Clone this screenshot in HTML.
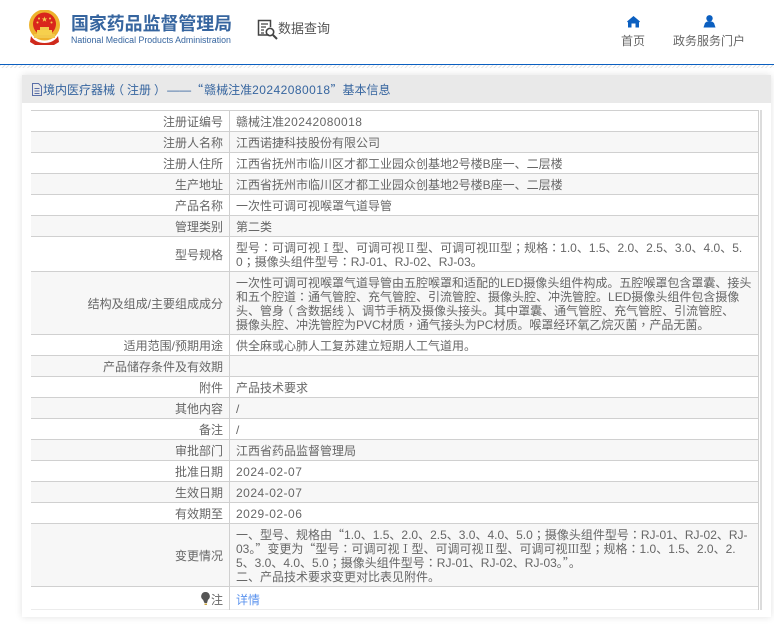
<!DOCTYPE html>
<html><head><meta charset="utf-8"><style>
html,body{margin:0;padding:0;background:#fff}
body{width:774px;height:626px;overflow:hidden;position:relative;font-family:"Liberation Sans","Noto Sans CJK SC",sans-serif;color:#666;font-size:12px}
.a{position:absolute;white-space:nowrap}
.r{position:absolute;left:31px;width:727px;border-bottom:1px solid #d0d0d0;box-sizing:border-box}
.r.g{background:#f7f7f7}
.l{position:absolute;left:31px;width:192px;text-align:right;font-size:12px;line-height:16px;white-space:nowrap;margin-top:1px}
.v{position:absolute;left:236px;font-size:12px;line-height:14px;white-space:nowrap;margin-top:1px}
b{font-weight:400;font-family:"Noto Sans CJK TC",sans-serif}
b.p1{position:relative;left:-3px}
b.p2{position:relative;left:3px}
u{text-decoration:none;font-family:"Noto Sans CJK SC",sans-serif}
em{font-style:normal;font-family:"Noto Serif CJK SC",serif;display:inline-block;width:12px;text-align:center}
i{font-style:normal;letter-spacing:.45px}
</style></head><body>
<svg class="a" style="left:28px;top:10px" width="33" height="36" viewBox="0 0 33 36">
<circle cx="16.5" cy="15" r="15.5" fill="#eeb32d"/><circle cx="16.5" cy="14" r="11.5" fill="#d9261c"/>
<path d="M6 24h21v4H6z" fill="#f2c94c"/><path d="M9 20h15v5H9z" fill="#f6d04d"/><path d="M12 17h9v3h-9z" fill="#f2c94c"/>
<path d="M3 26c3 5 8 7 13.500 7S27 31 30 26l1 6-5 3H7l-5-3z" fill="#cf2a1c"/>
<path d="M16.500 6.500l.7 2h2.100l-1.700 1.300.7 2-1.800-1.300-1.800 1.300.7-2-1.700-1.300h2.100z" fill="#f6d04d"/>
<circle cx="11" cy="8.500" r="1" fill="#f6d04d"/><circle cx="22" cy="8.500" r="1" fill="#f6d04d"/><circle cx="9.500" cy="12.500" r="1" fill="#f6d04d"/><circle cx="23.500" cy="12.500" r="1" fill="#f6d04d"/>
</svg>
<div class="a" style="left:71px;top:11px;font-size:17.9px;line-height:26px;font-weight:700;color:#36659f">国家药品监督管理局</div>
<div class="a" style="left:71px;top:34px;font-size:8.8px;line-height:12px;color:#36659f">National Medical Products Administration</div>
<svg class="a" style="left:257px;top:19px" width="22" height="21" viewBox="0 0 22 21" fill="none" stroke="#444">
<path d="M12 16H1.500V1.500h12V8" stroke-width="1.500"/><path d="M4 5h7M4 8h5M4 11h3M4 14h3" stroke-width="1.200"/><circle cx="13" cy="13" r="3.700" stroke-width="1.600"/><path d="M16 16l4 4" stroke-width="2"/>
</svg>
<div class="a" style="left:278px;top:20px;font-size:13px;line-height:18px;color:#555">数据查询</div>
<svg class="a" style="left:627px;top:15px" width="13" height="13" viewBox="0 0 13 13"><path d="M6.500 1L13 6.500 12 7.500V12.500H8.500V8.500h-4v4H1V7.500L0 6.500z" fill="#0b5fc0"/></svg>
<svg class="a" style="left:703px;top:15px" width="13" height="13" viewBox="0 0 13 13"><circle cx="6.500" cy="3.300" r="3.200" fill="#0b5fc0"/><path d="M4 6.500h5l2 1.500 1.500 4.500H.5L2 8z" fill="#0b5fc0"/></svg>
<div class="a" style="left:621px;top:33px;font-size:12px;line-height:15px;margin-top:1px">首页</div>
<div class="a" style="left:673px;top:33px;font-size:12px;line-height:15px;margin-top:1px">政务服务门户</div>
<div class="a" style="left:0;top:64px;width:774px;height:1px;background:#0b5fc0"></div>
<div class="a" style="left:0;top:65px;width:774px;height:3px;background:repeating-linear-gradient(135deg,#e4e4e4 0 1px,#fff 1px 3px)"></div>
<div class="a" style="left:22px;top:75px;width:749px;height:542px;background:#fff;box-shadow:0 0 7px rgba(0,0,0,.12)"></div>
<div class="a" style="left:22px;top:75px;width:749px;height:28px;background:#e9e9e9"></div>
<svg class="a" style="left:32px;top:83px" width="10" height="13" viewBox="0 0 10 13" fill="none" stroke="#5a6fa8"><path d="M.5.500h6l3 3v9H.5zM2.500 5.500h5M2.500 8h5M2.500 10.500h5"/></svg>
<div class="a" style="left:43px;top:82px;font-size:12px;line-height:16px;color:#36659f">境内医疗器械<b class="p1">（</b>注册<b class="p2">）</b><span style="margin-left:4px">——</span><u>“</u><span style="margin-left:1px">赣</span>械注准<i>20242080018</i><u>”</u>基本信息</div>

<div class="a" style="left:31px;top:110px;width:727px;height:1px;background:#d0d0d0"></div>
<div class="r" style="top:111px;height:21px"></div>
<div class="r g" style="top:132px;height:21px"></div>
<div class="r" style="top:153px;height:21px"></div>
<div class="r g" style="top:174px;height:21px"></div>
<div class="r" style="top:195px;height:21px"></div>
<div class="r g" style="top:216px;height:21px"></div>
<div class="r" style="top:237px;height:35px"></div>
<div class="r g" style="top:272px;height:63px"></div>
<div class="r" style="top:335px;height:21px"></div>
<div class="r g" style="top:356px;height:21px"></div>
<div class="r" style="top:377px;height:21px"></div>
<div class="r g" style="top:398px;height:21px"></div>
<div class="r" style="top:419px;height:21px"></div>
<div class="r g" style="top:440px;height:21px"></div>
<div class="r" style="top:461px;height:21px"></div>
<div class="r g" style="top:482px;height:21px"></div>
<div class="r" style="top:503px;height:21px"></div>
<div class="r g" style="top:524px;height:63px"></div>
<div class="r" style="top:587px;height:23px;border-bottom:1px solid #ececec"></div>
<div class="a" style="left:229px;top:110px;width:1px;height:500px;background:#d0d0d0"></div>
<div class="a" style="left:758px;top:110px;width:1px;height:500px;background:#d0d0d0"></div>
<div class="a" style="left:760px;top:110px;width:2px;height:500px;background:#dcdcdc"></div>

<div class="l" style="top:113px">注册证编号</div><div class="v" style="top:114px">赣械注准<i>20242080018</i></div>
<div class="l" style="top:134px">注册人名称</div><div class="v" style="top:135px">江西诺捷科技股份有限公司</div>
<div class="l" style="top:155px">注册人住所</div><div class="v" style="top:156px">江西省抚州市临川区才都工业园众创基地2号楼B座一、二层楼</div>
<div class="l" style="top:176px">生产地址</div><div class="v" style="top:177px">江西省抚州市临川区才都工业园众创基地2号楼B座一、二层楼</div>
<div class="l" style="top:197px">产品名称</div><div class="v" style="top:198px">一次性可调可视喉罩气道导管</div>
<div class="l" style="top:218px">管理类别</div><div class="v" style="top:219px">第二类</div>
<div class="l" style="top:246px">型号规格</div>
<div class="v" style="top:240px">型号<b>：</b>可调可视<em>Ⅰ</em>型、可调可视<em>Ⅱ</em>型、可调可视<em>Ⅲ</em>型<b>；</b>规格<b>：</b>1.0、1.5、2.0、2.5、3.0、4.0、5.</div>
<div class="v" style="top:254px">0<b>；</b>摄像头组件型号<b>：</b>RJ-01、RJ-02、RJ-03。</div>
<div class="l" style="top:295px">结构及组成/主要组成成分</div>
<div class="v" style="top:275px">一次性可调可视喉罩气道导管由五腔喉罩和适配的LED摄像头组件构成。五腔喉罩包含罩囊、接头</div>
<div class="v" style="top:289px">和五个腔道<b>：</b>通气管腔、充气管腔、引流管腔、摄像头腔、冲洗管腔。LED摄像头组件包含摄像</div>
<div class="v" style="top:303px">头、管身<b class="p1">（</b>含数据线<b class="p2">）</b>、调节手柄及摄像头接头。其中罩囊、通气管腔、充气管腔、引流管腔、</div>
<div class="v" style="top:317px">摄像头腔、冲洗管腔为PVC材质<b>，</b>通气接头为PC材质。喉罩经环氧乙烷灭菌<b>，</b>产品无菌。</div>
<div class="l" style="top:337px">适用范围/预期用途</div><div class="v" style="top:338px">供全麻或心肺人工复苏建立短期人工气道用。</div>
<div class="l" style="top:358px">产品储存条件及有效期</div>
<div class="l" style="top:379px">附件</div><div class="v" style="top:380px">产品技术要求</div>
<div class="l" style="top:400px">其他内容</div><div class="v" style="top:401px">/</div>
<div class="l" style="top:421px">备注</div><div class="v" style="top:422px">/</div>
<div class="l" style="top:442px">审批部门</div><div class="v" style="top:443px">江西省药品监督管理局</div>
<div class="l" style="top:463px">批准日期</div><div class="v" style="top:464px"><i style="letter-spacing:.5px">2024-02-07</i></div>
<div class="l" style="top:484px">生效日期</div><div class="v" style="top:485px"><i style="letter-spacing:.5px">2024-02-07</i></div>
<div class="l" style="top:505px">有效期至</div><div class="v" style="top:506px"><i style="letter-spacing:.5px">2029-02-06</i></div>
<div class="l" style="top:547px">变更情况</div>
<div class="v" style="top:527px">一、型号、规格由<u>“</u>1.0、1.5、2.0、2.5、3.0、4.0、5.0<b>；</b>摄像头组件型号<b>：</b>RJ-01、RJ-02、RJ-</div>
<div class="v" style="top:541px">03。<u>”</u>变更为<u>“</u>型号<b>：</b>可调可视<em>Ⅰ</em>型、可调可视<em>Ⅱ</em>型、可调可视<em>Ⅲ</em>型<b>；</b>规格<b>：</b>1.0、1.5、2.0、2.</div>
<div class="v" style="top:555px">5、3.0、4.0、5.0<b>；</b>摄像头组件型号<b>：</b>RJ-01、RJ-02、RJ-03。<u>”</u>。</div>
<div class="v" style="top:569px">二、产品技术要求变更对比表见附件。</div>
<svg class="a" style="left:201px;top:592px" width="9" height="13" viewBox="0 0 9 13"><path d="M4.500 0a4.300 4.300 0 0 1 2.500 7.800L6 11H3.500L2 7.800A4.300 4.300 0 0 1 4.500 0z" fill="#555"/><path d="M3.500 11.500H6V13H3.500z" fill="#c9a33d"/></svg>
<div class="l" style="top:591px">注</div><div class="v" style="top:592px;color:#5b93ee">详情</div>
</body></html>
